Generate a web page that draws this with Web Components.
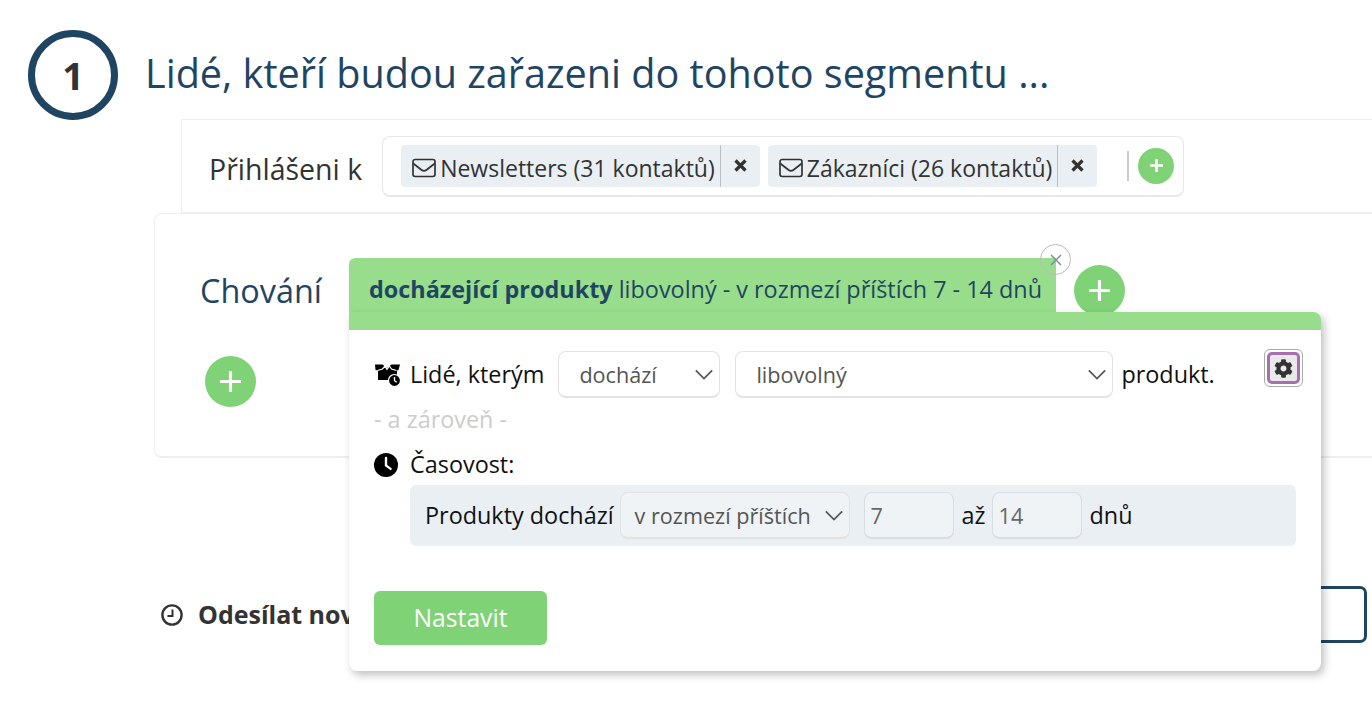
<!DOCTYPE html>
<html lang="cs"><head><meta charset="utf-8"><title>Segment</title>
<style>
html,body{margin:0;padding:0;background:#fff;width:1372px;height:712px;overflow:hidden;font-family:"Open Sans",sans-serif;color:#333}
</style></head><body>
<seg-page>
  <step-heading num="1">Lidé, kteří budou zařazeni do tohoto segmentu ...</step-heading>
  <list-row label="Přihlášeni k">
    <seg-tag>Newsletters (31 kontaktů)</seg-tag>
    <seg-tag>Zákazníci (26 kontaktů)</seg-tag>
  </list-row>
  <behavior-card>Chování</behavior-card>
  <send-row>Odesílat nov</send-row>
  <seg-popup>
    <b slot="title">docházející produkty</b>
    <span slot="desc">libovolný - v rozmezí příštích 7 - 14 dnů</span>
  </seg-popup>
</seg-page>
<script>
const icons={
 plus:(s,w)=>`<svg width="${s}" height="${s}" viewBox="0 0 24 24" fill="none" stroke="#fff" stroke-width="${w||3.6}"><path d="M12 0v24M0 12h24"/></svg>`,
 env:`<svg width="24" height="20" viewBox="0 0 24 20" fill="none" stroke="#333" stroke-width="1.7" stroke-linejoin="round"><rect x="1" y="1.5" width="22" height="17" rx="2.2"/><path d="M1.3 5.5 9.6 12c1.4 1.1 3.4 1.1 4.8 0l8.3-6.5"/></svg>`,
 cog:`<svg width="19" height="19" viewBox="0 0 512 512" fill="#333"><path d="M487.4 315.7l-42.6-24.6c4.3-23.2 4.3-47 0-70.2l42.6-24.6c4.9-2.8 7.1-8.6 5.5-14-11.1-35.6-30-67.8-54.7-94.6-3.8-4.1-10-5.1-14.8-2.3L380.8 110c-17.9-15.4-38.5-27.3-60.8-35.1V25.8c0-5.6-3.9-10.5-9.4-11.7-36.7-8.2-74.3-7.8-109.2 0-5.5 1.2-9.4 6.1-9.4 11.7V75c-22.2 7.9-42.8 19.8-60.8 35.1L88.7 85.5c-4.9-2.8-11-1.9-14.8 2.3-24.7 26.7-43.6 58.9-54.7 94.6-1.7 5.4.6 11.2 5.5 14L67.3 221c-4.3 23.2-4.3 47 0 70.2l-42.6 24.6c-4.9 2.8-7.1 8.6-5.5 14 11.1 35.6 30 67.8 54.7 94.6 3.8 4.1 10 5.1 14.8 2.3l42.6-24.6c17.9 15.4 38.5 27.3 60.8 35.1v49.2c0 5.6 3.9 10.5 9.4 11.7 36.7 8.2 74.3 7.8 109.2 0 5.5-1.2 9.4-6.1 9.4-11.7v-49.2c22.2-7.9 42.8-19.8 60.8-35.1l42.6 24.6c4.9 2.8 11 1.9 14.8-2.3 24.7-26.7 43.6-58.9 54.7-94.6 1.5-5.5-.7-11.3-5.6-14.1zM256 336c-44.1 0-80-35.9-80-80s35.9-80 80-80 80 35.9 80 80-35.9 80-80 80z"/></svg>`,
 clockSolid:`<svg width="24" height="24" viewBox="0 0 24 24"><circle cx="12" cy="12" r="12" fill="#000"/><path d="M12 5v7.5l4.6 3.4" fill="none" stroke="#fff" stroke-width="2.4" stroke-linecap="round"/></svg>`,
 clockLine:`<svg width="22" height="22" viewBox="0 0 22 22" fill="none" stroke="#333" stroke-width="2.4"><circle cx="11" cy="11" r="9.6"/><path d="M11.5 5.5V12H6.5" stroke-width="2"/></svg>`,
 box:`<svg width="27" height="24" viewBox="0 0 27 24"><path d="M1 1.500h7.500L13 5l4.500-3.500H26L24.500 7l-1.500.5V17H4V7.500L1.500 7z" fill="#000"/><path d="M3.500 7.500 8.500 6 11 3l2 3.500L15.500 3l2 3 5 1.500" fill="none" stroke="#fff" stroke-width="1.200"/><circle cx="20.500" cy="17.500" r="6" fill="#000" stroke="#fff" stroke-width="1.200"/><path d="M20.500 14v3.700l2.200 1.400" fill="none" stroke="#fff" stroke-width="1.300"/></svg>`,
 chev:`<svg width="20" height="11" viewBox="0 0 22 12" fill="none" stroke="#555" stroke-width="1.900"><path d="M2 1.500 11 10.500 20 1.500"/></svg>`,
 close:`<svg width="12" height="12" viewBox="0 0 12 12" fill="none" stroke="#7d8ea3" stroke-width="1.500"><path d="M1 1l10 10M11 1 1 11"/></svg>`
};
function def(name,html,init){
  customElements.define(name,class extends HTMLElement{
    constructor(){super();this.attachShadow({mode:'open'});}
    connectedCallback(){const a=n=>this.getAttribute(n)||'';this.shadowRoot.innerHTML=html(a);init&&init(this);}
  });
}
def('seg-page',()=>`<style>:host{display:block;position:relative;width:1372px;height:712px;overflow:hidden;padding-top:30px;box-sizing:border-box}
::slotted(seg-popup){position:absolute;left:349px;top:258px}</style><slot></slot>`);
def('add-btn',a=>`<style>:host{display:flex;align-items:center;justify-content:center;flex:none;border-radius:50%;background:#7fd275;width:${a('size')}px;height:${a('size')}px}</style>${icons.plus(a('icon'),a('sw'))}`);
def('step-heading',a=>`<style>:host{display:flex;align-items:center;gap:28px;padding-left:28px;height:90px;margin-bottom:-1px;color:#1f4563}
.n{box-sizing:border-box;width:90px;height:90px;border:7px solid #1f4563;border-radius:50%;display:flex;align-items:center;justify-content:center;font-size:38px;font-weight:700;color:#333}
.t{font-size:39.6px;position:relative;top:-2px;margin-left:-1px;white-space:nowrap}</style><div class="n">${a('num')}</div><div class="t"><slot></slot></div>`);
def('list-row',a=>`<style>:host{display:flex;align-items:center;box-sizing:border-box;margin-left:181px;margin-right:-10px;height:95px;border:1px solid #eee;border-bottom-width:2px;padding-left:27px;gap:18px}
.l{font-size:28.5px;white-space:nowrap;padding-top:6px}
.box{box-sizing:border-box;width:802px;height:61px;border:1px solid #e8e8e8;border-bottom-width:2px;border-radius:8px;display:flex;align-items:center;padding-left:18px;gap:8px;margin-left:2px}
.sep{width:2px;height:30px;background:#ccc;margin-left:auto;margin-right:1px}
add-btn{margin-right:9px}</style>
<div class="l">${a('label')}</div><div class="box"><slot></slot><div class="sep"></div><add-btn size="36" icon="13" sw="5"></add-btn></div>`);
def('seg-tag',()=>`<style>:host{display:flex;align-items:center;height:42px;background:#e9eff3;border-radius:4px;font-size:23px;color:#333;white-space:nowrap;padding-left:11px}
.i{display:flex;margin:5px 4px 0 0}.t{padding-top:4px}.x{display:flex;align-items:center;justify-content:center;align-self:stretch;width:39px;margin-left:5px;border-left:1px solid #b9bfc3;font-size:0}
</style><span class="i">${icons.env}</span><span class="t"><slot></slot></span><span class="x"><svg width="13" height="13" viewBox="0 0 13 13" stroke="#333" stroke-width="3.200"><path d="M1.500 1.500l10 10M11.500 1.500l-10 10"/></svg></span>`);
def('behavior-card',()=>`<style>:host{display:block;box-sizing:border-box;margin-left:154px;margin-right:-10px;margin-top:-1px;height:245px;border:1px solid #eee;border-bottom-width:2px;border-radius:8px 0 0 8px;padding:56px 0 0 45px}
.t{font-size:32.4px;color:#1f4563;line-height:41px}add-btn{margin:45px 0 0 5px}</style><div class="t"><slot></slot></div><add-btn size="51" icon="21"></add-btn>`);
def('send-row',()=>`<style>:host{display:flex;align-items:center;justify-content:space-between;margin:128px 5px 0 161px;height:57px}
.l{display:flex;align-items:center;gap:16px;font-size:25px;font-weight:700;color:#333;white-space:nowrap}.l svg{flex:none}.l span{padding-bottom:2px;margin-left:-1px}
.b{box-sizing:border-box;width:500px;height:57px;border:3px solid #1f4563;border-radius:7px}</style>
<div class="l">${icons.clockLine}<span><slot></slot></span></div><div class="b"></div>`);
def('seg-select',a=>`<style>:host{display:flex;align-items:center;justify-content:space-between;box-sizing:border-box;height:47px;width:${a('w')}px;background:${a('bg')||'#fff'};border:1px solid #e2e2e2;border-bottom-width:2px;border-radius:8px;padding:0 5px 0 ${a('pl')||20}px;font-size:21.6px;color:#555;white-space:nowrap}</style><slot></slot>${icons.chev}`);
def('seg-num',a=>`<style>:host{display:flex;align-items:center;box-sizing:border-box;height:47px;width:90px;background:#eff3f6;border:1px solid #d9dde0;border-bottom-width:2px;border-radius:8px;padding-left:6px;font-size:21.6px;color:#666}</style><slot></slot>`);
def('seg-popup',()=>`<style>:host{display:block;width:972px;height:413px;font-size:23.4px;color:#111}
.top{display:flex;align-items:flex-start;height:54px;position:relative;z-index:0}
.tab{position:relative;box-sizing:border-box;height:54px;width:707px;background:#98dd8c;border-radius:6px 0 0 0;padding:14px 0 0 20px;font-size:23.4px;color:#1f4563;white-space:nowrap;line-height:34px}
.tab ::slotted(b){font-weight:700}
.close{position:absolute;right:-15px;top:-14px;width:31px;height:31px;box-sizing:border-box;border:1px solid #bbb;border-radius:50%;display:flex;align-items:center;justify-content:center}
add-btn{margin:7px 0 0 18px}
.card{position:relative;box-sizing:border-box;height:359px;background:#fff;border-top:18px solid #98dd8c;border-radius:8px;border-top-left-radius:0;box-shadow:3px 4px 9px rgba(0,0,0,.25);padding:21px 25px 0}
.r{display:flex;align-items:center;gap:8px}
.ic{display:flex;width:28px;flex:none}
.up{padding-bottom:2px}
.r1{height:47px;position:relative}
.r1 seg-select:first-of-type{margin:0 7px 0 6px}
.gear{position:absolute;right:-7px;top:-2px;box-sizing:border-box;width:39px;height:38px;border:1px solid #aaa;border-radius:6px;padding:2px;display:flex}
.gear i{flex:1;display:flex;align-items:center;justify-content:center;background:#e9e9e9;border:3px solid #a66fae;border-radius:5px}
.and{color:#ccc;font-size:23.4px;line-height:30px;margin-top:6px}
.r2{margin-top:16px;height:30px}
.bx{display:flex;align-items:center;gap:7px;box-sizing:border-box;height:61px;margin:5px 0 0 36px;width:886px;background:#e9eff3;border-radius:6px;padding-left:15px;white-space:nowrap}
.btn{display:flex;align-items:center;justify-content:center;box-sizing:border-box;padding-bottom:2px;width:173px;height:54px;background:#7fd275;border-radius:6px;color:#fff;font-size:24.7px;margin-top:45px}
</style>
<div class="top"><div class="tab"><slot name="title"></slot> <slot name="desc"></slot><span class="close">${icons.close}</span></div><add-btn size="51" icon="21"></add-btn></div>
<div class="card">
  <div class="r r1"><span class="ic">${icons.box}</span><span class="up">Lidé, kterým</span>
    <seg-select w="162">dochází</seg-select><seg-select w="378">libovolný</seg-select><span class="up">produkt.</span>
    <span class="gear"><i>${icons.cog}</i></span></div>
  <div class="and">- a zároveň -</div>
  <div class="r r2"><span class="ic">${icons.clockSolid}</span><span class="up">Časovost:</span></div>
  <div class="bx"><span class="up" style="margin-right:-1px">Produkty dochází</span><seg-select w="230" pl="14" bg="#eff3f6">v rozmezí příštích</seg-select><seg-num style="margin-left:7px">7</seg-num><span class="up" style="margin:0 -1px 0 1px">až</span><seg-num>14</seg-num><span class="up" style="margin-left:1px">dnů</span></div>
  <div class="btn">Nastavit</div>
</div>`);
</script>
</body></html>
